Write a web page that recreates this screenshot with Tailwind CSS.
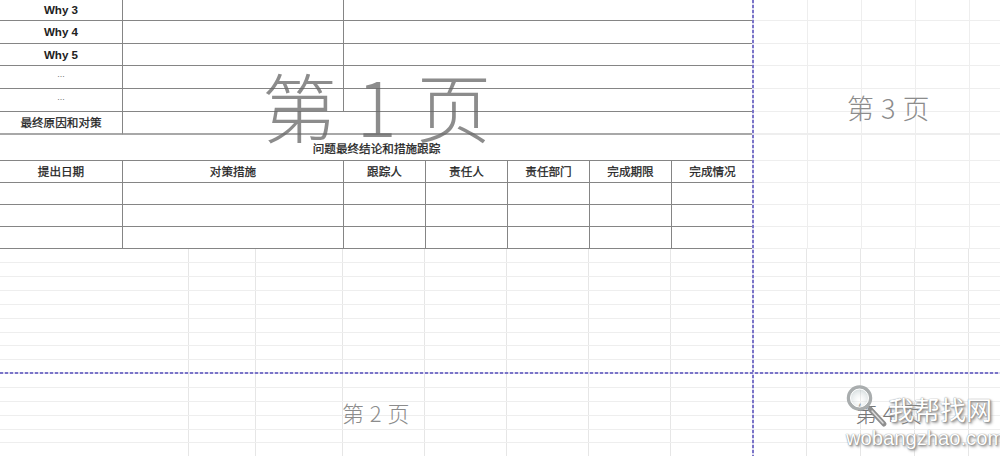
<!DOCTYPE html>
<html lang="zh-CN">
<head>
    <meta charset="UTF-8">
    <title>问题最终结论和措施跟踪</title>
    <script src="https://cdn.jsdelivr.net/npm/@tailwindcss/browser@4"></script>
</head>
<body class="bg-white">
<div class="relative w-[1000px] h-[456px] overflow-hidden font-['Liberation_Sans','Noto_Sans_CJK_SC',sans-serif] text-[11.6px] font-bold text-[#222]">

    <!-- sheet: top table -->
    <div class="grid grid-cols-[122px_67px_67px_87px_82px_82px_82px_82px_82px_54px_54px_54px_54px_31px] grid-rows-[21px_23px_22px_23px_23px_23px_26px_22px_22px_22px_22px]">
        <!-- Why 3 -->
        <div class="flex items-center justify-center border-b border-[#858585]">Why 3</div>
        <div class="col-span-3 border-l border-b border-[#858585]"></div>
        <div class="col-span-5 border-l border-b border-[#858585]"></div>
        <div class="border-b border-[#eee]"></div><div class="border-l border-b border-[#eee]"></div><div class="border-l border-b border-[#eee]"></div><div class="border-l border-b border-[#eee]"></div><div class="border-l border-b border-[#eee]"></div>
        <!-- Why 4 -->
        <div class="flex items-center justify-center border-b border-[#858585]">Why 4</div>
        <div class="col-span-3 border-l border-b border-[#858585]"></div>
        <div class="col-span-5 border-l border-b border-[#858585]"></div>
        <div class="border-b border-[#eee]"></div><div class="border-l border-b border-[#eee]"></div><div class="border-l border-b border-[#eee]"></div><div class="border-l border-b border-[#eee]"></div><div class="border-l border-b border-[#eee]"></div>
        <!-- Why 5 -->
        <div class="flex items-center justify-center border-b border-[#858585]">Why 5</div>
        <div class="col-span-3 border-l border-b border-[#858585]"></div>
        <div class="col-span-5 border-l border-b border-[#858585]"></div>
        <div class="border-b border-[#eee]"></div><div class="border-l border-b border-[#eee]"></div><div class="border-l border-b border-[#eee]"></div><div class="border-l border-b border-[#eee]"></div><div class="border-l border-b border-[#eee]"></div>
        <!-- ... -->
        <div class="flex items-center justify-center pb-1 border-b border-[#858585] text-[#777] font-normal text-[9px]">...</div>
        <div class="col-span-3 border-l border-b border-[#858585]"></div>
        <div class="col-span-5 border-l border-b border-[#858585]"></div>
        <div class="border-b border-[#eee]"></div><div class="border-l border-b border-[#eee]"></div><div class="border-l border-b border-[#eee]"></div><div class="border-l border-b border-[#eee]"></div><div class="border-l border-b border-[#eee]"></div>
        <div class="flex items-center justify-center pb-1 border-b border-[#858585] text-[#777] font-normal text-[9px]">...</div>
        <div class="col-span-3 border-l border-b border-[#858585]"></div>
        <div class="col-span-5 border-l border-b border-[#858585]"></div>
        <div class="border-b border-[#eee]"></div><div class="border-l border-b border-[#eee]"></div><div class="border-l border-b border-[#eee]"></div><div class="border-l border-b border-[#eee]"></div><div class="border-l border-b border-[#eee]"></div>
        <!-- final cause -->
        <div class="flex items-center justify-center border-b-2 border-[#a8a8a8] font-normal [-webkit-text-stroke:0.25px_#222]">最终原因和对策</div>
        <div class="col-span-8 border-l border-l-[#858585] border-b-2 border-b-[#a8a8a8]"></div>
        <div class="border-b-2 border-[#eee]"></div><div class="border-l border-b-2 border-[#eee]"></div><div class="border-l border-b-2 border-[#eee]"></div><div class="border-l border-b-2 border-[#eee]"></div><div class="border-l border-b-2 border-[#eee]"></div>
        <!-- section title -->
        <div class="col-span-9 flex items-center justify-center pt-[2px] border-b border-[#858585] font-normal [-webkit-text-stroke:0.25px_#222]">问题最终结论和措施跟踪</div>
        <div class="border-b border-[#eee]"></div><div class="border-l border-b border-[#eee]"></div><div class="border-l border-b border-[#eee]"></div><div class="border-l border-b border-[#eee]"></div><div class="border-l border-b border-[#eee]"></div>
        <!-- header -->
        <div class="flex items-center justify-center border-b border-[#858585] font-normal [-webkit-text-stroke:0.25px_#222]">提出日期</div>
        <div class="col-span-3 flex items-center justify-center border-l border-b border-[#858585] font-normal [-webkit-text-stroke:0.25px_#222]">对策措施</div>
        <div class="flex items-center justify-center border-l border-b border-[#858585] font-normal [-webkit-text-stroke:0.25px_#222]">跟踪人</div>
        <div class="flex items-center justify-center border-l border-b border-[#858585] font-normal [-webkit-text-stroke:0.25px_#222]">责任人</div>
        <div class="flex items-center justify-center border-l border-b border-[#858585] font-normal [-webkit-text-stroke:0.25px_#222]">责任部门</div>
        <div class="flex items-center justify-center border-l border-b border-[#858585] font-normal [-webkit-text-stroke:0.25px_#222]">完成期限</div>
        <div class="flex items-center justify-center border-l border-b border-[#858585] font-normal [-webkit-text-stroke:0.25px_#222]">完成情况</div>
        <div class="border-b border-[#eee]"></div><div class="border-l border-b border-[#eee]"></div><div class="border-l border-b border-[#eee]"></div><div class="border-l border-b border-[#eee]"></div><div class="border-l border-b border-[#eee]"></div>
        <!-- empty rows -->
        <div class="border-b border-[#858585]"></div>
        <div class="col-span-3 border-l border-b border-[#858585]"></div>
        <div class="border-l border-b border-[#858585]"></div><div class="border-l border-b border-[#858585]"></div><div class="border-l border-b border-[#858585]"></div><div class="border-l border-b border-[#858585]"></div><div class="border-l border-b border-[#858585]"></div>
        <div class="border-b border-[#eee]"></div><div class="border-l border-b border-[#eee]"></div><div class="border-l border-b border-[#eee]"></div><div class="border-l border-b border-[#eee]"></div><div class="border-l border-b border-[#eee]"></div>
        <div class="border-b border-[#858585]"></div>
        <div class="col-span-3 border-l border-b border-[#858585]"></div>
        <div class="border-l border-b border-[#858585]"></div><div class="border-l border-b border-[#858585]"></div><div class="border-l border-b border-[#858585]"></div><div class="border-l border-b border-[#858585]"></div><div class="border-l border-b border-[#858585]"></div>
        <div class="border-b border-[#eee]"></div><div class="border-l border-b border-[#eee]"></div><div class="border-l border-b border-[#eee]"></div><div class="border-l border-b border-[#eee]"></div><div class="border-l border-b border-[#eee]"></div>
        <div class="border-b border-[#858585]"></div>
        <div class="col-span-3 border-l border-b border-[#858585]"></div>
        <div class="border-l border-b border-[#858585]"></div><div class="border-l border-b border-[#858585]"></div><div class="border-l border-b border-[#858585]"></div><div class="border-l border-b border-[#858585]"></div><div class="border-l border-b border-[#858585]"></div>
        <div class="border-b border-[#eee]"></div><div class="border-l border-b border-[#eee]"></div><div class="border-l border-b border-[#eee]"></div><div class="border-l border-b border-[#eee]"></div><div class="border-l border-b border-[#eee]"></div>
    </div>

    <!-- sheet: empty cells under the table -->
    <div class="divide-y divide-[#eee] border-b border-[#eee]">
        <div class="grid grid-cols-[122px_67px_67px_87px_82px_82px_82px_82px_82px_54px_54px_54px_54px_31px] h-[14px] divide-x divide-[#e6e6e6]"><div class="border-0"></div><div></div><div></div><div></div><div></div><div></div><div></div><div></div><div></div><div></div><div></div><div></div><div></div><div></div></div>
        <div class="grid grid-cols-[122px_67px_67px_87px_82px_82px_82px_82px_82px_54px_54px_54px_54px_31px] h-[14px] divide-x divide-[#e6e6e6]"><div class="border-0"></div><div></div><div></div><div></div><div></div><div></div><div></div><div></div><div></div><div></div><div></div><div></div><div></div><div></div></div>
        <div class="grid grid-cols-[122px_67px_67px_87px_82px_82px_82px_82px_82px_54px_54px_54px_54px_31px] h-[14px] divide-x divide-[#e6e6e6]"><div class="border-0"></div><div></div><div></div><div></div><div></div><div></div><div></div><div></div><div></div><div></div><div></div><div></div><div></div><div></div></div>
        <div class="grid grid-cols-[122px_67px_67px_87px_82px_82px_82px_82px_82px_54px_54px_54px_54px_31px] h-[14px] divide-x divide-[#e6e6e6]"><div class="border-0"></div><div></div><div></div><div></div><div></div><div></div><div></div><div></div><div></div><div></div><div></div><div></div><div></div><div></div></div>
        <div class="grid grid-cols-[122px_67px_67px_87px_82px_82px_82px_82px_82px_54px_54px_54px_54px_31px] h-[14px] divide-x divide-[#e6e6e6]"><div class="border-0"></div><div></div><div></div><div></div><div></div><div></div><div></div><div></div><div></div><div></div><div></div><div></div><div></div><div></div></div>
        <div class="grid grid-cols-[122px_67px_67px_87px_82px_82px_82px_82px_82px_54px_54px_54px_54px_31px] h-[14px] divide-x divide-[#e6e6e6]"><div class="border-0"></div><div></div><div></div><div></div><div></div><div></div><div></div><div></div><div></div><div></div><div></div><div></div><div></div><div></div></div>
        <div class="grid grid-cols-[122px_67px_67px_87px_82px_82px_82px_82px_82px_54px_54px_54px_54px_31px] h-[13px] divide-x divide-[#e6e6e6]"><div class="border-0"></div><div></div><div></div><div></div><div></div><div></div><div></div><div></div><div></div><div></div><div></div><div></div><div></div><div></div></div>
        <div class="grid grid-cols-[122px_67px_67px_87px_82px_82px_82px_82px_82px_54px_54px_54px_54px_31px] h-[14px] divide-x divide-[#e6e6e6]"><div class="border-0"></div><div></div><div></div><div></div><div></div><div></div><div></div><div></div><div></div><div></div><div></div><div></div><div></div><div></div></div>
        <div class="grid grid-cols-[122px_67px_67px_87px_82px_82px_82px_82px_82px_54px_54px_54px_54px_31px] h-[14px] divide-x divide-[#e6e6e6]"><div class="border-0"></div><div></div><div></div><div></div><div></div><div></div><div></div><div></div><div></div><div></div><div></div><div></div><div></div><div></div></div>
        <div class="grid grid-cols-[122px_67px_67px_87px_82px_82px_82px_82px_82px_54px_54px_54px_54px_31px] h-[14px] divide-x divide-[#e6e6e6]"><div class="border-0"></div><div></div><div></div><div></div><div></div><div></div><div></div><div></div><div></div><div></div><div></div><div></div><div></div><div></div></div>
        <div class="grid grid-cols-[122px_67px_67px_87px_82px_82px_82px_82px_82px_54px_54px_54px_54px_31px] h-[14px] divide-x divide-[#e6e6e6]"><div class="border-0"></div><div></div><div></div><div></div><div></div><div></div><div></div><div></div><div></div><div></div><div></div><div></div><div></div><div></div></div>
        <div class="grid grid-cols-[122px_67px_67px_87px_82px_82px_82px_82px_82px_54px_54px_54px_54px_31px] h-[14px] divide-x divide-[#e6e6e6]"><div class="border-0"></div><div></div><div></div><div></div><div></div><div></div><div></div><div></div><div></div><div></div><div></div><div></div><div></div><div></div></div>
        <div class="grid grid-cols-[122px_67px_67px_87px_82px_82px_82px_82px_82px_54px_54px_54px_54px_31px] h-[14px] divide-x divide-[#e6e6e6]"><div class="border-0"></div><div></div><div></div><div></div><div></div><div></div><div></div><div></div><div></div><div></div><div></div><div></div><div></div><div></div></div>
        <div class="grid grid-cols-[122px_67px_67px_87px_82px_82px_82px_82px_82px_54px_54px_54px_54px_31px] h-[13px] divide-x divide-[#e6e6e6]"><div class="border-0"></div><div></div><div></div><div></div><div></div><div></div><div></div><div></div><div></div><div></div><div></div><div></div><div></div><div></div></div>
        <div class="grid grid-cols-[122px_67px_67px_87px_82px_82px_82px_82px_82px_54px_54px_54px_54px_31px] h-[14px] divide-x divide-[#e6e6e6]"><div class="border-0"></div><div></div><div></div><div></div><div></div><div></div><div></div><div></div><div></div><div></div><div></div><div></div><div></div><div></div></div>
    </div>

    <!-- page breaks -->
    <div class="absolute left-[752px] top-0 h-full w-[2px] bg-[repeating-linear-gradient(180deg,#7a74c8_0_3px,#dcdaf0_3px_5px)]"></div>
    <div class="absolute left-0 top-[372px] w-full h-[2px] bg-[repeating-linear-gradient(90deg,#7a74c8_0_3px,#dcdaf0_3px_5px)]"></div>

    <!-- page watermarks -->
    <div class="absolute left-[262px] top-[65px] whitespace-pre font-light leading-[80px] text-[75px] [word-spacing:3px] text-[#666]/75 font-['Noto_Sans_CJK_SC',sans-serif]">第 1 页</div>
    <div class="absolute left-[847px] top-[88px] whitespace-pre font-light leading-[40px] text-[27px] [word-spacing:1px] text-[#8c8c8c] font-['Noto_Sans_CJK_SC',sans-serif]">第 3 页</div>
    <div class="absolute left-[342px] top-[396px] whitespace-pre font-light leading-[32px] text-[22px] [word-spacing:1px] text-[#8c8c8c] font-['Noto_Sans_CJK_SC',sans-serif]">第 2 页</div>
    <div class="absolute left-[855px] top-[396px] whitespace-pre font-light leading-[32px] text-[22px] [word-spacing:1px] text-[#777] font-['Noto_Sans_CJK_SC',sans-serif]">第 4 页</div>

    <!-- site logo over the corner -->
    <svg class="absolute left-[842px] top-[382px]" width="48" height="48" viewBox="0 0 48 48" fill="none">
        <defs>
            <radialGradient id="lens" cx="0.5" cy="0.6" r="0.6">
                <stop offset="0" stop-color="#ffffff" stop-opacity="0.2"/>
                <stop offset="1" stop-color="#9fb0b4" stop-opacity="0.55"/>
            </radialGradient>
        </defs>
        <path d="M28 27 L42 42" stroke="#8f8f8f" stroke-width="5" stroke-linecap="round"/>
        <path d="M30 29 L41 41" stroke="#dcdcdc" stroke-width="1.5" stroke-linecap="round"/>
        <circle cx="17.5" cy="16" r="11" fill="url(#lens)" stroke="#a9adae" stroke-width="3.5"/>
        <circle cx="17.5" cy="16" r="9" stroke="#ffffff" stroke-width="1"/>
    </svg>
    <div class="absolute left-[888px] top-[389px] whitespace-pre leading-[40px] text-[26px] font-normal text-white font-['Noto_Sans_CJK_SC',sans-serif] [text-shadow:0_0_1px_#777,1px_1px_2px_#888,2px_2px_3px_#aaa]">我帮找网</div>
    <div class="absolute left-[846px] top-[424px] whitespace-pre leading-[28px] text-[20.2px] font-normal text-white font-['Liberation_Sans',sans-serif] [text-shadow:0_0_1px_#777,1px_1px_2px_#888,2px_2px_3px_#aaa]">wobangzhao.com</div>
</div>
</body>
</html>
